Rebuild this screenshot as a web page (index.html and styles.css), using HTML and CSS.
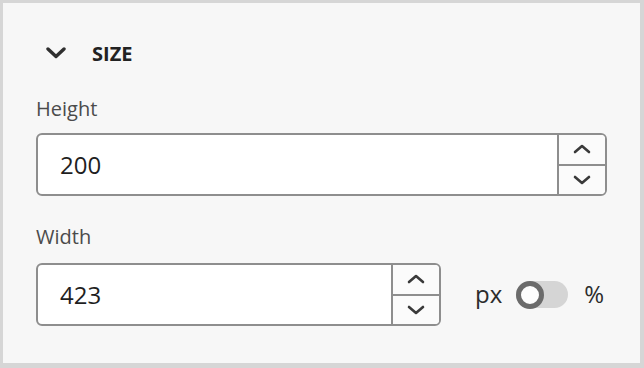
FILE: index.html
```html
<!DOCTYPE html>
<html>
<head>
<meta charset="utf-8">
<link rel="stylesheet" href="styles.css">
</head>
<body>
<div class="panel">
  <div class="header">
    <svg class="chev" width="20" height="12" viewBox="0 0 20 12"><path d="M2 2 L10 9.5 L18 2" fill="none" stroke="#2f2f2f" stroke-width="3.4" stroke-linecap="round" stroke-linejoin="round"/></svg>
    <span class="title">SIZE</span>
  </div>
  <div class="label first">Height</div>
  <div class="field wide">
    <div class="value">200</div>
    <div class="stepper">
      <div class="step"><svg width="18" height="10" viewBox="0 0 18 10"><path d="M2 8 L9 2 L16 8" fill="none" stroke="#3a3a3a" stroke-width="2.6" stroke-linecap="round" stroke-linejoin="round"/></svg></div>
      <div class="step down"><svg width="18" height="10" viewBox="0 0 18 10"><path d="M2 2 L9 8 L16 2" fill="none" stroke="#3a3a3a" stroke-width="2.6" stroke-linecap="round" stroke-linejoin="round"/></svg></div>
    </div>
  </div>
  <div class="label second">Width</div>
  <div class="row">
    <div class="field narrow">
      <div class="value">423</div>
      <div class="stepper">
        <div class="step"><svg width="18" height="10" viewBox="0 0 18 10"><path d="M2 8 L9 2 L16 8" fill="none" stroke="#3a3a3a" stroke-width="2.6" stroke-linecap="round" stroke-linejoin="round"/></svg></div>
        <div class="step down"><svg width="18" height="10" viewBox="0 0 18 10"><path d="M2 2 L9 8 L16 2" fill="none" stroke="#3a3a3a" stroke-width="2.6" stroke-linecap="round" stroke-linejoin="round"/></svg></div>
      </div>
    </div>
    <div class="unit">px</div>
    <div class="toggle"><div class="knob"></div></div>
    <div class="unit pct">%</div>
  </div>
</div>
</body>
</html>
```
FILE: styles.css
```css
html, body {
  margin: 0;
  padding: 0;
  background: #d6d6d6;
}
body {
  width: 644px;
  height: 368px;
  overflow: hidden;
  font-family: "Open Sans", "Noto Sans", sans-serif;
}
.panel {
  margin: 3px 0 0 3px;
  width: 637px;
  height: 360px;
  box-sizing: border-box;
  background: #f7f7f7;
  padding: 38px 0 0 33px;
  display: flex;
  flex-direction: column;
  align-items: flex-start;
}
.header {
  display: flex;
  align-items: center;
  height: 24px;
  margin-left: 10px;
}
.chev {
  display: block;
}
.title {
  margin-left: 26px;
  font-weight: 700;
  font-size: 20px;
  color: #222;
}
.label {
  font-size: 20px;
  line-height: 24px;
  color: #4b4b4b;
}
.label.first {
  margin-top: 32px;
}
.label.second {
  margin-top: 29px;
}
.field {
  display: flex;
  height: 63px;
  box-sizing: border-box;
  border: 2px solid #8e8e8e;
  border-radius: 6px;
  background: #fff;
  overflow: hidden;
}
.field.wide {
  width: 571px;
  margin-top: 12px;
}
.field.narrow {
  width: 405px;
}
.row {
  display: flex;
  align-items: center;
  margin-top: 14px;
}
.value {
  flex: 1;
  display: flex;
  align-items: center;
  padding-left: 22px;
  font-size: 24px;
  color: #1f1f1f;
}
.stepper {
  width: 46px;
  border-left: 2px solid #8e8e8e;
  display: flex;
  flex-direction: column;
  background: #fbfbfb;
}
.step {
  flex: 1;
  display: flex;
  align-items: center;
  justify-content: center;
}
.step.down {
  border-top: 2px solid #8e8e8e;
}
.step svg {
  display: block;
}
.unit {
  font-size: 24px;
  color: #2c2c2c;
  margin-left: 34px;
  margin-top: -2px;
}
.unit.pct {
  margin-left: 16px;
}
.toggle {
  margin-left: 14px;
  width: 52px;
  height: 27px;
  border-radius: 14px;
  background: #d5d5d5;
  position: relative;
}
.knob {
  position: absolute;
  left: 0;
  top: 0;
  width: 28px;
  height: 28px;
  box-sizing: border-box;
  border-radius: 50%;
  border: 5px solid #6b6b6b;
  background: #fdfdfd;
  margin-top: -0.5px;
}
```
